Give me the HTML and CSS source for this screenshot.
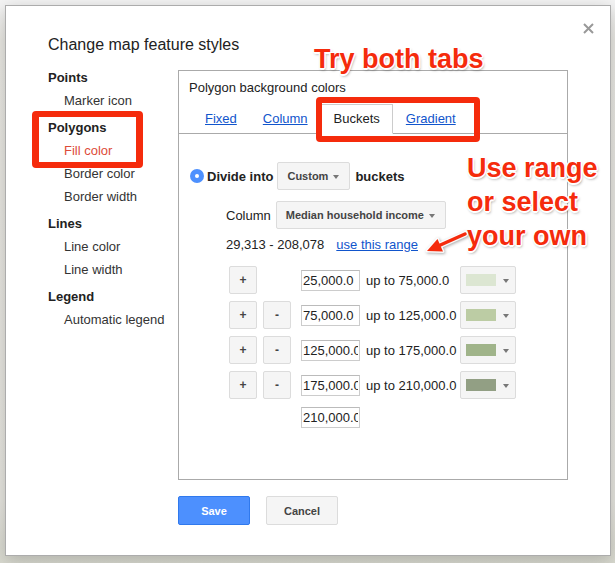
FILE: index.html
```html
<!DOCTYPE html>
<html>
<head>
<meta charset="utf-8">
<link rel="stylesheet" href="styles.css">
</head>
<body>
<div class="dialog">
  <svg class="close" width="11" height="11" viewBox="0 0 11 11"><path d="M1 1L10 10M10 1L1 10" stroke="#999" stroke-width="2"/></svg>
  <div class="title">Change map feature styles</div>
  <div class="main">
    <div class="side">
      <div class="group">
        <div class="head">Points</div>
        <div class="item">Marker icon</div>
      </div>
      <div class="group">
        <div class="head">Polygons</div>
        <div class="item sel">Fill color</div>
        <div class="item">Border color</div>
        <div class="item">Border width</div>
      </div>
      <div class="group">
        <div class="head">Lines</div>
        <div class="item">Line color</div>
        <div class="item">Line width</div>
      </div>
      <div class="group">
        <div class="head">Legend</div>
        <div class="item">Automatic legend</div>
      </div>
    </div>
    <div class="panel">
      <div class="ptitle">Polygon background colors</div>
      <div class="tabs">
        <div class="tab"><a>Fixed</a></div>
        <div class="tab"><a>Column</a></div>
        <div class="tab active">Buckets</div>
        <div class="tab"><a>Gradient</a></div>
      </div>
      <div class="pbody">
        <div class="row r-divide">
          <span class="radio"></span>
          <b class="lbl">Divide into</b>
          <div class="dd">Custom<span class="arr"></span></div>
          <b class="lbl2">buckets</b>
        </div>
        <div class="row r-col">
          <span class="clbl">Column</span>
          <div class="dd">Median household income<span class="arr"></span></div>
        </div>
        <div class="r-range">29,313 - 208,078<a class="uselink">use this range</a></div>
        <div class="buckets">
          <div class="brow">
            <div class="btn">+</div><div class="spacer"></div>
            <input class="num" type="text" value="25,000.0">
            <span class="upto">up to 75,000.0</span>
            <div class="picker"><span class="sw sw1"></span><span class="arr"></span></div>
          </div>
          <div class="brow">
            <div class="btn">+</div><div class="btn minus">-</div>
            <input class="num" type="text" value="75,000.0">
            <span class="upto">up to 125,000.0</span>
            <div class="picker"><span class="sw sw2"></span><span class="arr"></span></div>
          </div>
          <div class="brow">
            <div class="btn">+</div><div class="btn minus">-</div>
            <input class="num" type="text" value="125,000.0">
            <span class="upto">up to 175,000.0</span>
            <div class="picker"><span class="sw sw3"></span><span class="arr"></span></div>
          </div>
          <div class="brow">
            <div class="btn">+</div><div class="btn minus">-</div>
            <input class="num" type="text" value="175,000.0">
            <span class="upto">up to 210,000.0</span>
            <div class="picker"><span class="sw sw4"></span><span class="arr"></span></div>
          </div>
          <div class="lastrow">
            <input class="num" type="text" value="210,000.0">
          </div>
        </div>
      </div>
    </div>
  </div>
  <div class="actions">
    <div class="abtn save">Save</div>
    <div class="abtn cancel">Cancel</div>
  </div>
</div>

<div class="rbox rbox1"></div>
<div class="rbox rbox2"></div>
<div class="note note1">Try both tabs</div>
<div class="note note2">Use range<br>or select<br>your own</div>
<svg class="arrow" width="56" height="32" viewBox="420 226 56 32">
  <g fill="#fff" stroke="#fff" stroke-width="3" stroke-linejoin="round" opacity="0.9">
    <path d="M465 234 L437 246.5" fill="none" stroke-width="6" stroke-linecap="round"/>
    <path d="M427 251 L443 251.5 L437.5 239 Z"/>
  </g>
  <path d="M465 234 L437 246.5" stroke="#f52b0c" stroke-width="3.5" stroke-linecap="round" fill="none"/>
  <path d="M427 251 L443 251.5 L437.5 239 Z" fill="#f52b0c"/>
</svg>
</body>
</html>
```
FILE: styles.css
```css
html, body {
  margin: 0;
  padding: 0;
}
body {
  width: 615px;
  height: 563px;
  overflow: hidden;
  position: relative;
  background: linear-gradient(180deg, #f4f4f4 0px, #f4f4f4 6px, #e9e8e3 40px, #e6e5df 500px, #d8d9cf 563px);
  font-family: "Liberation Sans", Arial, sans-serif;
  color: #222;
  padding: 5px 0 0 5px;
  box-sizing: border-box;
}
.dialog {
  position: relative;
  width: 606px;
  box-sizing: border-box;
  background: #fff;
  border: 1px solid #acacac;
  box-shadow: 0 4px 16px rgba(0, 0, 0, 0.2);
  padding: 29px 42px 30px 42px;
}
.close {
  position: absolute;
  left: 577px;
  top: 17px;
}
.title {
  font-size: 16px;
  line-height: 20px;
  color: #222;
  margin-bottom: 11px;
}
.main {
  display: flex;
  align-items: flex-start;
}
.side {
  width: 130px;
  flex: none;
  font-size: 13px;
  line-height: 23px;
}
.group + .group {
  margin-top: 4px;
}
.head {
  font-weight: bold;
  color: #222;
}
.item {
  padding-left: 16px;
  color: #333;
}
.item.sel {
  color: #dd4b39;
}
.panel {
  width: 390px;
  height: 410px;
  box-sizing: border-box;
  border: 1px solid #aaa;
  margin-top: 4px;
  padding-top: 9px;
  font-size: 13px;
}
.ptitle {
  padding-left: 10px;
  line-height: 16px;
  color: #222;
}
.tabs {
  margin-top: 8px;
  display: flex;
  height: 29px;
  padding-left: 13px;
  border-bottom: 1px solid #aaa;
}
.tab {
  box-sizing: border-box;
  height: 30px;
  margin-bottom: -1px;
  padding: 0 12px;
  border: 1px solid transparent;
  line-height: 28px;
}
.tab a {
  color: #15c;
  text-decoration: underline;
}
.tab.active {
  background: #fff;
  border-color: #ccc #ccc #fff #ccc;
  color: #222;
}
.pbody {
  padding: 28px 0 0 11px;
}
.row {
  display: flex;
  align-items: center;
  height: 28px;
}
.radio {
  width: 14px;
  height: 14px;
  border-radius: 50%;
  background: #4d90fe;
  box-sizing: border-box;
  position: relative;
  flex: none;
}
.radio::after {
  content: "";
  position: absolute;
  left: 5px;
  top: 5px;
  width: 4px;
  height: 4px;
  border-radius: 50%;
  background: #fff;
}
.lbl {
  margin-left: 3px;
  margin-right: 4px;
  font-size: 13px;
  color: #222;
}
.lbl2 {
  margin-left: 5px;
  font-size: 13px;
  color: #222;
}
.dd {
  height: 28px;
  box-sizing: border-box;
  border: 1px solid #dcdcdc;
  border-radius: 2px;
  background: #f5f5f5;
  padding: 0 10px 0 9px;
  display: flex;
  align-items: center;
  font-size: 11px;
  font-weight: bold;
  color: #444;
}
.arr {
  width: 0;
  height: 0;
  border-left: 3.5px solid transparent;
  border-right: 3.5px solid transparent;
  border-top: 4px solid #777;
  margin-left: 5px;
  margin-top: 1px;
}
.r-col {
  margin-top: 11px;
  padding-left: 36px;
}
.clbl {
  margin-right: 5px;
  color: #222;
}
.r-range {
  margin-top: 8px;
  padding-left: 36px;
  line-height: 16px;
  color: #222;
}
.uselink {
  margin-left: 12px;
  color: #15c;
  text-decoration: underline;
}
.buckets {
  margin-top: 13px;
  padding-left: 39px;
}
.brow {
  display: flex;
  align-items: center;
  height: 28px;
}
.brow + .brow {
  margin-top: 7px;
}
.btn {
  width: 28px;
  height: 28px;
  box-sizing: border-box;
  border: 1px solid #dcdcdc;
  border-radius: 2px;
  background: #f5f5f5;
  color: #444;
  font-size: 12px;
  font-weight: bold;
  display: flex;
  align-items: center;
  justify-content: center;
  flex: none;
}
.minus, .spacer {
  margin-left: 6px;
}
.spacer {
  width: 28px;
  flex: none;
}
.num {
  margin: 0 0 0 10px;
  width: 59px;
  height: 21px;
  box-sizing: border-box;
  border: 1px solid #ccc;
  border-top-color: #bbb;
  padding: 0 1px;
  font-family: "Liberation Sans", Arial, sans-serif;
  font-size: 13px;
  color: #222;
  outline: none;
  flex: none;
}
.upto {
  margin-left: 6px;
  width: 94px;
  flex: none;
  white-space: nowrap;
  color: #222;
}
.picker {
  width: 56px;
  height: 28px;
  box-sizing: border-box;
  border: 1px solid #dcdcdc;
  border-radius: 2px;
  background: #f5f5f5;
  display: flex;
  align-items: center;
  padding-left: 5px;
  flex: none;
}
.sw {
  width: 30px;
  height: 12px;
  flex: none;
}
.picker .arr {
  margin-left: 7px;
}
.sw1 { background: #dce6d2; }
.sw2 { background: #bccca4; }
.sw3 { background: #a0b48a; }
.sw4 { background: #929f84; }
.lastrow {
  margin-top: 8px;
  padding-left: 72px;
  display: flex;
}
.lastrow .num {
  margin-left: 0;
}
.actions {
  display: flex;
  margin-top: 16px;
  padding-left: 130px;
}
.abtn {
  width: 72px;
  height: 29px;
  box-sizing: border-box;
  border-radius: 2px;
  font-size: 11px;
  font-weight: bold;
  display: flex;
  align-items: center;
  justify-content: center;
}
.save {
  background: #4d90fe;
  border: 1px solid #3079ed;
  color: #fff;
}
.cancel {
  margin-left: 16px;
  background: #f5f5f5;
  border: 1px solid #dcdcdc;
  color: #444;
}
.rbox {
  position: absolute;
  box-sizing: border-box;
  border: 6px solid #f52b0c;
  border-radius: 4px;
}
.rbox1 {
  left: 32px;
  top: 111px;
  width: 111px;
  height: 57px;
  border-width: 6px 7px;
}
.rbox2 {
  left: 316px;
  top: 97px;
  width: 164px;
  height: 45px;
}
.note {
  position: absolute;
  font-family: "Liberation Sans", Arial, sans-serif;
  font-weight: bold;
  font-size: 27px;
  color: #f52b0c;
  text-shadow: -1px -1px 0 #fff, 1px -1px 0 #fff, -1px 1px 0 #fff, 1px 1px 0 #fff, 0 -1.5px 0 #fff, 0 1.5px 0 #fff, -1.5px 0 0 #fff, 1.5px 0 0 #fff, 1px 2px 3px rgba(0, 0, 0, 0.45);
  white-space: nowrap;
}
.note1 {
  left: 314px;
  top: 44px;
  line-height: 30px;
}
.note2 {
  left: 467px;
  top: 151px;
  line-height: 34px;
}
.arrow {
  position: absolute;
  left: 420px;
  top: 226px;
  filter: drop-shadow(1px 1px 1.5px rgba(0, 0, 0, 0.35));
}
```
